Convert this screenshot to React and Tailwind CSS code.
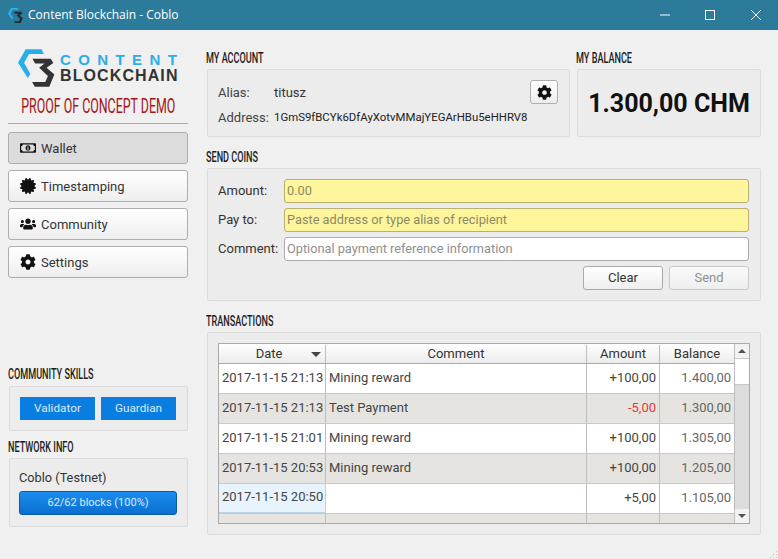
import React from "react";
import { FaCertificate, FaCog, FaRegMoneyBillAlt, FaUsers } from "react-icons/fa";

const panel = "border border-[#dcdcdc] bg-[#ececec] rounded-[2px]";
const navBtn = "h-8 w-[180px] flex items-center pl-[11px] gap-[5px] border border-[#aeaeae] rounded-[3px] text-[13px] text-[#333]";

const Heading = ({ children, className = "" }) => (
  <div className={`h-[18px] leading-[18px] whitespace-nowrap ${className}`}>
    <span className="inline-block origin-left scale-x-[0.65] text-[14px] font-medium text-[#1c1c1c] uppercase">{children}</span>
  </div>
);

const Logo = ({ small }) => (
  <svg viewBox="25 15 110 115" className={small ? "w-[15px] h-[17px]" : "w-[37px] h-[40px]"}>
    <path d="M48 17 H95 L102 31 H58 L43 57 L62 90 L54 102 L25 57 Z" fill={small ? "#29b6f6" : "#2aaee8"} />
    <path d="M68 45 H122 L130 58 L110 72 L133 92 L118 128 H75 L67 114 H106 L114 96 L88 72 L104 59 H76 Z" fill={small ? "#1f2a33" : "#333333"} />
  </svg>
);

const NavButton = ({ icon, label, active }) => (
  <div className={`${navBtn} ${active ? "bg-[#dcdcdc]" : "bg-gradient-to-b from-white to-[#eeeeee]"}`}>
    <span className="w-4 flex justify-center text-[#111] text-[18px]">{icon}</span>
    <span className="pt-px">{label}</span>
  </div>
);

const rows = [
  ["2017-11-15 21:13", "Mining reward", "+100,00", "1.400,00"],
  ["2017-11-15 21:13", "Test Payment", "-5,00", "1.300,00"],
  ["2017-11-15 21:01", "Mining reward", "+100,00", "1.305,00"],
  ["2017-11-15 20:53", "Mining reward", "+100,00", "1.205,00"],
  ["2017-11-15 20:50", "", "+5,00", "1.105,00"],
];

const Field = ({ label, placeholder, yellow }) => (
  <div className="flex items-center h-6">
    <span className="w-[66px] text-[13px] text-[#333]">{label}</span>
    <div className={`h-6 w-[465px] flex items-center pl-[2px] border rounded-[3px] text-[12.75px] ${yellow ? "bg-[#fff59d] border-[#b9b06f] text-[#8c8a62]" : "bg-white border-[#ababab] text-[#8f8f8f]"}`}>
      {placeholder}
    </div>
  </div>
);

const App = () => {
  return (
    <div className="relative w-[778px] h-[559px] overflow-hidden bg-[#f0f0f0] font-['Roboto',sans-serif] text-[#333]">
      <div className="h-[30px] bg-[#2d7b9b] flex items-center pl-[8px] text-white">
        <Logo small />
        <span className="ml-[5px] text-[12px] font-['Open_Sans',sans-serif]">Content Blockchain - Coblo</span>
        <div className="ml-auto flex items-center text-white">
          <svg viewBox="0 0 12 12" className="w-3 h-3 mr-[33px]"><path d="M1 6 H11" stroke="currentColor" strokeWidth="1" /></svg>
          <svg viewBox="0 0 12 12" className="w-3 h-3 mr-[34px]"><rect x="1.5" y="1.5" width="9" height="9" fill="none" stroke="currentColor" /></svg>
          <svg viewBox="0 0 12 12" className="w-3 h-3 mr-4"><path d="M1 1 L11 11 M11 1 L1 11" stroke="currentColor" strokeWidth="1" /></svg>
        </div>
      </div>

      <div className="flex">
        {/* sidebar */}
        <div className="w-[180px] ml-2 flex flex-col">
          <div className="flex items-center mt-[17px] ml-[10px] h-[41px]">
            <Logo />
            <div className="ml-[5px] flex flex-col font-['Liberation_Sans',sans-serif] font-bold">
              <span className="text-[#2aaee8] text-[15px] leading-[16px] tracking-[7.4px] whitespace-nowrap">CONTENT</span>
              <span className="text-[#333] text-[16px] leading-[15px] tracking-[1.1px] whitespace-nowrap">BLOCKCHAIN</span>
            </div>
          </div>
          <div className="mt-[6px] flex justify-center h-6 leading-[24px] whitespace-nowrap">
            <span className="inline-block scale-x-[0.62] text-[20px] text-[#a31515]">PROOF OF CONCEPT DEMO</span>
          </div>
          <div className="mt-[5px] h-px bg-[#a8a8a8]" />
          <div className="mt-2 flex flex-col gap-[6px]">
            <NavButton active icon={<FaRegMoneyBillAlt />} label="Wallet" />
            <NavButton icon={<FaCertificate />} label="Timestamping" />
            <NavButton icon={<FaUsers />} label="Community" />
            <NavButton icon={<FaCog />} label="Settings" />
          </div>
          <Heading className="mt-[87px]">Community Skills</Heading>
          <div className={`${panel} ml-px mt-[3px] h-[45px] flex items-center pl-[10px] gap-[6px]`}>
            <div className="w-[75px] h-[23px] bg-[#0a7de0] text-[#d8ecff] text-[11.75px] flex items-center justify-center">Validator</div>
            <div className="w-[75px] h-[23px] bg-[#0a7de0] text-[#d8ecff] text-[11.75px] flex items-center justify-center">Guardian</div>
          </div>
          <Heading className="mt-[7px]">Network Info</Heading>
          <div className={`${panel} ml-px mt-[2px] h-[69px] pl-[9px] pt-[10px]`}>
            <div className="text-[12.75px] leading-[18px] text-[#333]">Coblo (Testnet)</div>
            <div className="mt-[4px] w-[158px] h-[24px] rounded-[3px] border border-[#0b5ba8] bg-gradient-to-b from-[#1a8df0] to-[#0a6fd0] text-[#d8ecff] text-[11px] flex items-center justify-center">62/62 blocks (100%)</div>
          </div>
        </div>

        {/* main */}
        <div className="ml-[18px] w-[555px] flex flex-col">
          <div className="flex mt-[19px]">
            <div className="w-[370px]">
              <Heading>My Account</Heading>
              <div className={`${panel} ml-px mt-[2px] w-[363px] h-[68px] relative text-[13px] flex flex-col pl-[10px] pt-[13px]`}>
                <div className="flex h-5 items-center">
                  <span className="w-[56px] text-[#444]">Alias:</span>
                  <span className="text-[13px]">titusz</span>
                </div>
                <div className="flex h-5 items-center mt-[5px]">
                  <span className="w-[56px] text-[#444]">Address:</span>
                  <span className="text-[11.4px] text-[#222] whitespace-nowrap">1GmS9fBCYk6DfAyXotvMMajYEGArHBu5eHHRV8</span>
                </div>
                <div className="absolute right-[11px] top-[10px] w-7 h-6 border border-[#aeaeae] rounded-[3px] bg-gradient-to-b from-white to-[#eeeeee] flex items-center justify-center text-[#111] text-[15px]"><FaCog /></div>
              </div>
            </div>
            <div>
              <Heading>My Balance</Heading>
              <div className={`${panel} ml-px mt-[2px] w-[184px] h-[68px] pt-px flex items-center justify-center font-bold text-[25px] text-[#111]`}>1.300,00 CHM</div>
            </div>
          </div>

          <Heading className="mt-[11px]">Send Coins</Heading>
          <div className={`${panel} ml-px mt-[2px] h-[133px] w-[554px] pl-[10px] pt-[10px]`}>
            <div className="flex flex-col gap-[5px]">
              <Field label="Amount:" placeholder="0.00" yellow />
              <Field label="Pay to:" placeholder="Paste address or type alias of recipient" yellow />
              <Field label="Comment:" placeholder="Optional payment reference information" />
            </div>
            <div className="flex justify-end gap-[6px] mt-[5px] w-[531px]">
              <div className="w-20 h-6 border border-[#aaaaaa] rounded-[3px] bg-gradient-to-b from-white to-[#eeeeee] flex items-center justify-center text-[13px] text-[#333]">Clear</div>
              <div className="w-20 h-6 border border-[#c8c8c8] rounded-[3px] bg-gradient-to-b from-[#fafafa] to-[#eeeeee] flex items-center justify-center text-[13px] text-[#8f8f8f]">Send</div>
            </div>
          </div>

          <Heading className="mt-[11px]">Transactions</Heading>
          <div className={`${panel} ml-px mt-[2px] h-[203px] w-[554px] pl-[10px] pt-[10px]`}>
            <div className="w-[532px] h-[181px] border border-[#a9a9a9] flex bg-[#e6e4e1]">
              <div className="w-[515px] flex flex-col text-[13px] text-[#444]">
                <div className="h-5 flex border-b border-[#a9a9a9] bg-gradient-to-b from-white to-[#ececec] text-[13px] text-[#333] pt-px">
                  <div className="w-[107px] border-r border-[#bdbdbd] relative flex items-center justify-center pr-[6px]">
                    Date
                    <span className="absolute right-[4px] top-[7px] border-x-[5px] border-x-transparent border-t-[5px] border-t-[#444]" />
                  </div>
                  <div className="w-[261px] border-r border-[#bdbdbd] flex items-center justify-center">Comment</div>
                  <div className="w-[73px] border-r border-[#bdbdbd] flex items-center justify-center">Amount</div>
                  <div className="flex-1 flex items-center justify-center">Balance</div>
                </div>
                {rows.map((row, i) => (
                  <div key={i} className={`h-[30px] shrink-0 flex pb-0 border-b border-[#c8c8c8] ${i % 2 ? "bg-[#e6e4e1]" : "bg-white"}`}>
                    <div className={`w-[107px] border-r flex items-center pl-[3px] pb-[2px] whitespace-nowrap ${i === 4 ? "bg-[#e8f4fd] border-[#bcd3e6] border-b" : "border-[#bdbdbd]"}`}>{row[0]}</div>
                    <div className="w-[261px] border-r border-[#bdbdbd] flex items-center pl-[3px] pb-[2px]">{row[1]}</div>
                    <div className={`w-[73px] border-r border-[#bdbdbd] flex items-center justify-end pr-[3px] pb-[2px] ${row[2][0] === "-" ? "text-[#e53935]" : ""}`}>{row[2]}</div>
                    <div className="flex-1 flex items-center justify-end pr-[3px] pb-[2px] text-[#666]">{row[3]}</div>
                  </div>
                ))}
                <div className="flex-1 flex bg-[#e6e4e1]">
                  <div className="w-[107px] border-r border-[#bdbdbd]" />
                  <div className="w-[261px] border-r border-[#bdbdbd]" />
                  <div className="w-[73px] border-r border-[#bdbdbd]" />
                </div>
              </div>
              <div className="flex-1 flex flex-col border-l border-[#bdbdbd] bg-[#dcdcdc]">
                <div className="h-[14px] bg-[#f2f2f2] flex items-center justify-center">
                  <span className="border-x-[4px] border-x-transparent border-b-[4px] border-b-[#555]" />
                </div>
                <div className="h-[27px] bg-white border-y border-[#c8c8c8]" />
                <div className="flex-1" />
                <div className="h-[14px] bg-[#f2f2f2] flex items-center justify-center">
                  <span className="border-x-[4px] border-x-transparent border-t-[4px] border-t-[#555]" />
                </div>
              </div>
            </div>
          </div>
        </div>
      </div>

      {/* window resize grip */}
      <svg viewBox="0 0 9 9" className="absolute right-0 bottom-0 w-[9px] h-[9px]">
        <path d="M7 1h1v1H7zM4 4h1v1H4zM7 4h1v1H7zM1 7h1v1H1zM4 7h1v1H4zM7 7h1v1H7z" fill="#c4c4c4" />
      </svg>
    </div>
  );
};

export default App;
